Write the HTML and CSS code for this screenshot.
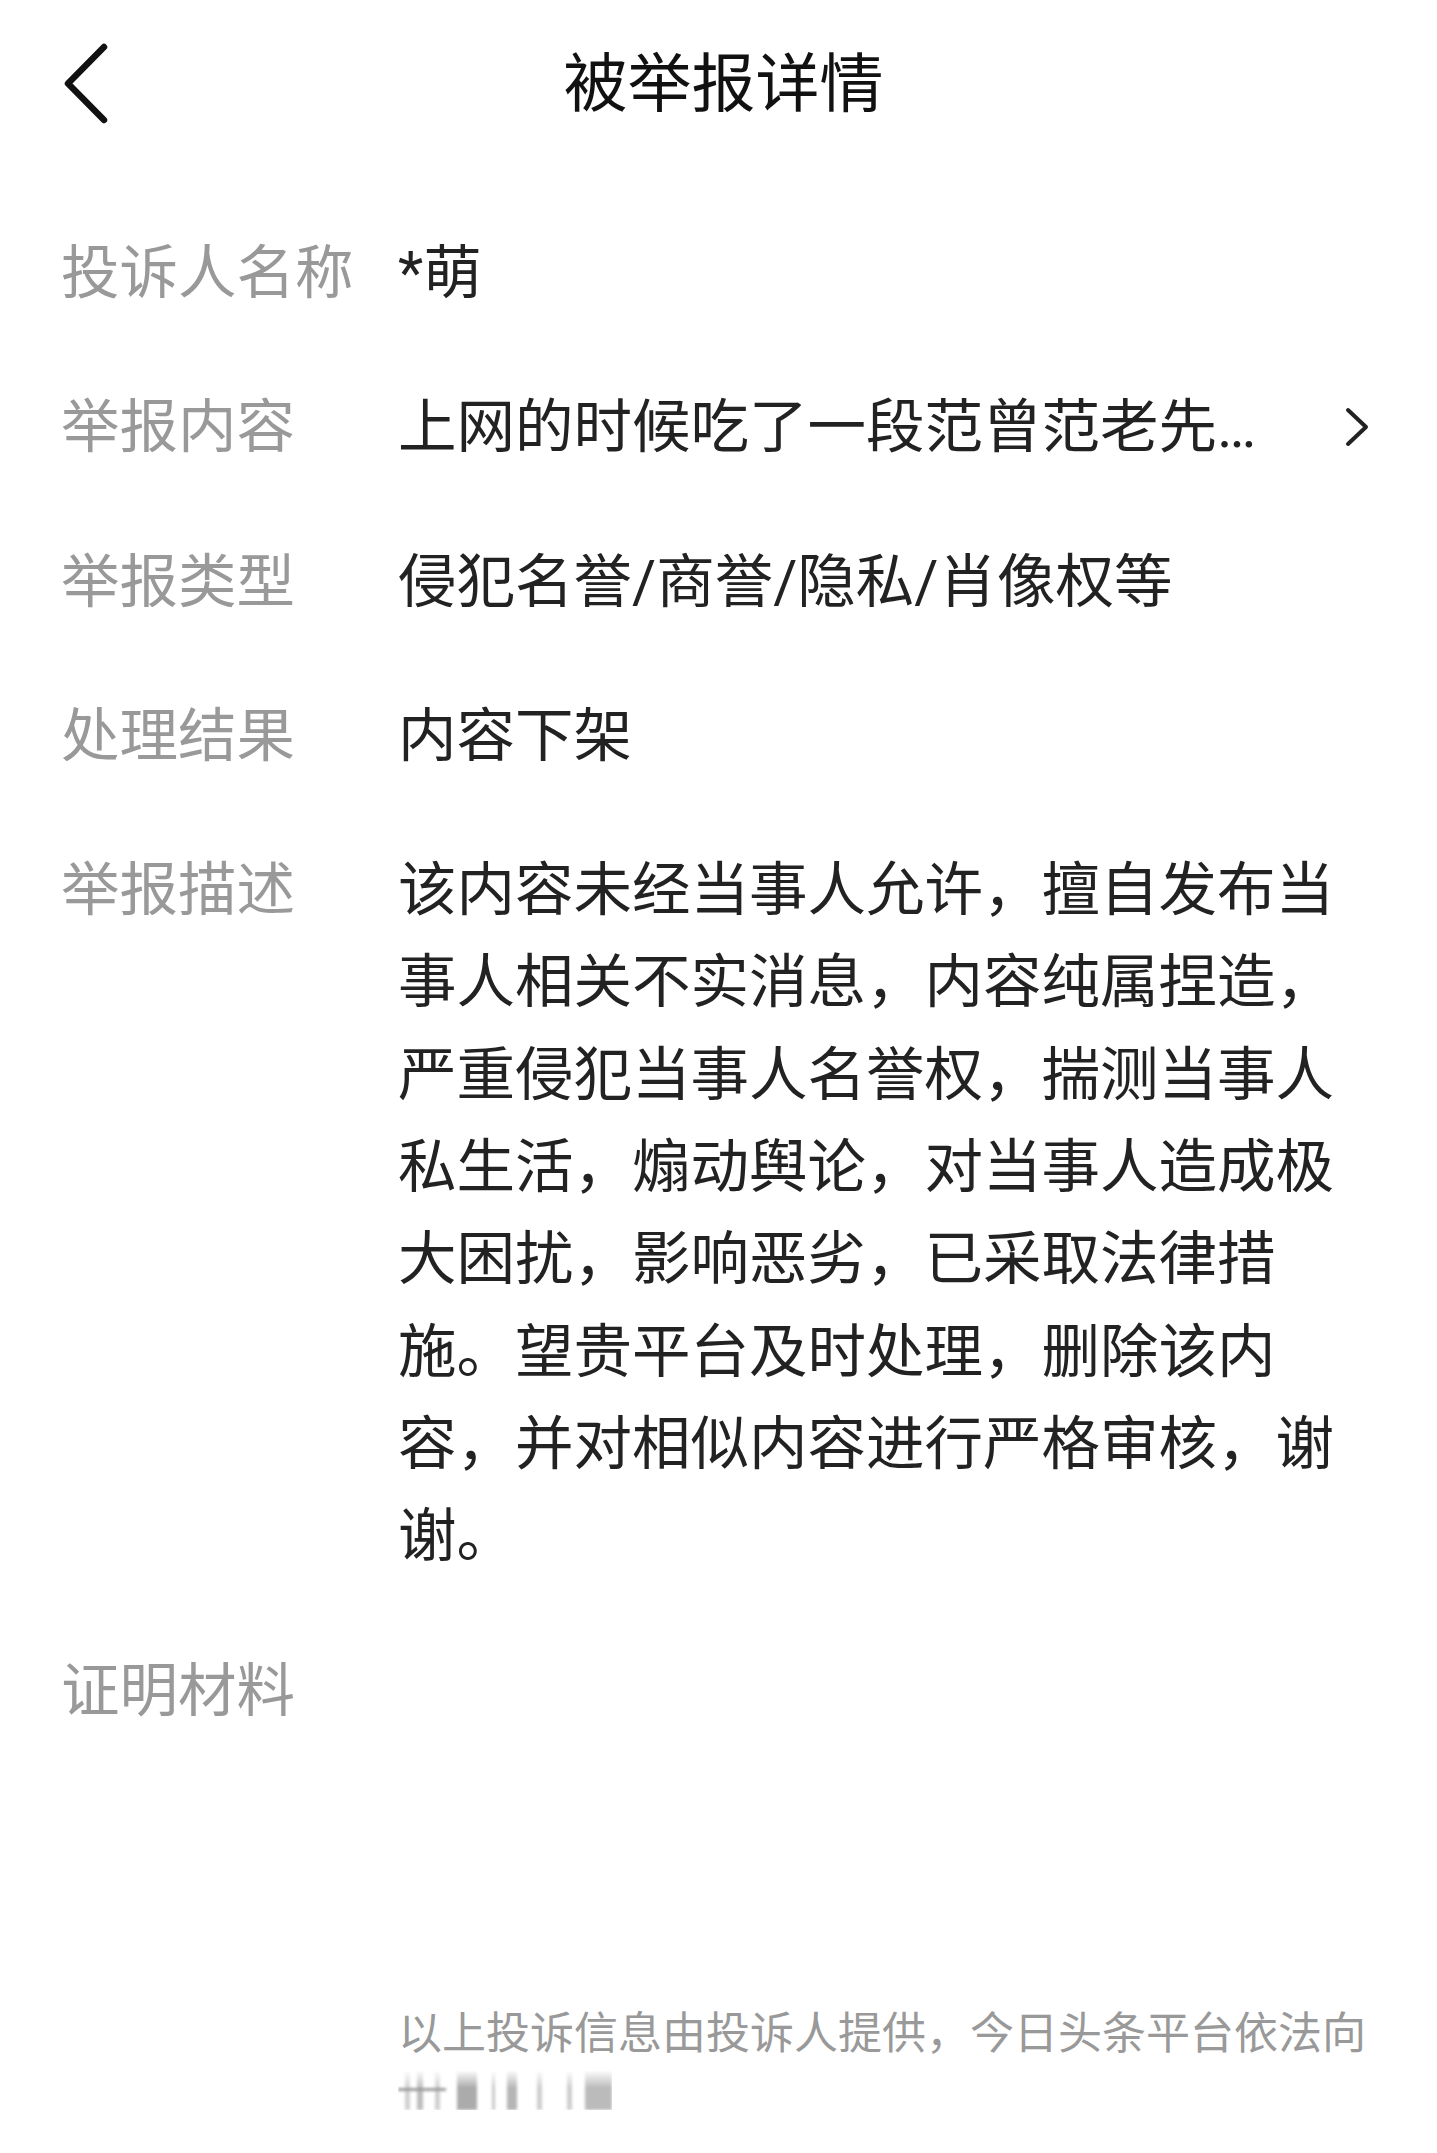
FILE: index.html
```html
<!DOCTYPE html>
<html lang="zh-CN">
<head>
<meta charset="utf-8">
<title>被举报详情</title>
<link rel="stylesheet" href="styles.css">
</head>
<body>
<header class="topbar">
  <button class="back" aria-label="返回">
    <svg viewBox="0 0 56 90" width="56" height="90"><path d="M44 7 L8 43.5 L44 80" fill="none" stroke="#111" stroke-width="6.5" stroke-linecap="round" stroke-linejoin="round"/></svg>
  </button>
  <h1 class="title">被举报详情</h1>
  <span class="spacer"></span>
</header>
<main class="details">
  <dl class="info">
    <div class="row">
      <dt>投诉人名称</dt>
      <dd>*萌</dd>
    </div>
    <div class="row row-link">
      <dt>举报内容</dt>
      <dd><span class="clip">上网的时候吃了一段范曾范老先…</span><svg class="chev" viewBox="0 0 24 40" width="24" height="40"><path d="M3 3 L21 20 L3 37" fill="none" stroke="#222" stroke-width="4" stroke-linecap="round" stroke-linejoin="round"/></svg></dd>
    </div>
    <div class="row">
      <dt>举报类型</dt>
      <dd>侵犯名誉/商誉/隐私/肖像权等</dd>
    </div>
    <div class="row">
      <dt>处理结果</dt>
      <dd>内容下架</dd>
    </div>
    <div class="row">
      <dt>举报描述</dt>
      <dd class="desc">该内容未经当事人允许，擅自发布当事人相关不实消息，内容纯属捏造，严重侵犯当事人名誉权，揣测当事人私生活，煽动舆论，对当事人造成极大困扰，影响恶劣，已采取法律措施。望贵平台及时处理，删除该内容，并对相似内容进行严格审核，谢谢。</dd>
    </div>
    <div class="row">
      <dt>证明材料</dt>
      <dd></dd>
    </div>
  </dl>
  <div class="footer">
    <p class="note">以上投诉信息由投诉人提供，今日头条平台依法向</p>
    <div class="mosaic"></div>
  </div>
</main>
</body>
</html>
```
FILE: styles.css
```css
html, body {
  margin: 0;
  background: #fff;
}
body {
  font-family: Roboto, "Noto Sans CJK SC", sans-serif;
  color: #222;
}
.topbar {
  display: grid;
  grid-template-columns: 1fr auto 1fr;
  align-items: center;
  height: 170px;
  padding: 0 60px;
}
.back {
  justify-self: start;
  display: block;
  width: 56px;
  height: 90px;
  padding: 0;
  border: 0;
  background: none;
}
.back svg {
  display: block;
}
.title {
  margin: 0 0 0 10px;
  font-size: 64px;
  font-weight: 400;
  line-height: 64px;
  color: #111;
}
.details {
  padding: 57px 60px 0 61px;
}
.info {
  margin: 0;
  display: flex;
  flex-direction: column;
  gap: 62px;
}
.row {
  display: grid;
  grid-template-columns: 337px 1fr;
  font-size: 58.5px;
  line-height: 92.3px;
}
.row dt {
  color: #999;
}
.row dd {
  margin: 0;
  color: #222;
  min-height: 92.3px;
}
.row-link dd {
  display: flex;
  justify-content: space-between;
  align-items: center;
}
.clip {
  white-space: nowrap;
}
.chev {
  display: block;
  margin-right: 8px;
}
.desc {
  max-width: 948px;
  text-spacing-trim: space-all;
}
.footer {
  margin: 268px 0 0 337px;
  font-size: 44px;
  line-height: 58px;
  color: #999;
}
.note {
  margin: 0;
  white-space: nowrap;
}
.mosaic {
  width: 214px;
  height: 40px;
  margin-top: 7px;
  background:
    linear-gradient(#9a9a9a, #9a9a9a) 0 18px / 48px 3px no-repeat,
    linear-gradient(to right, #fff 0 7px, #d0d0d0 7px 12px, #fff 12px 19px, #bdbdbd 19px 25px, #fff 25px 37px, #cfcfcf 37px 42px, #fff 42px 59px, #ababab 59px 79px, #fff 79px 94px, #c8c8c8 94px 97px, #fff 97px 109px, #b5b5b5 109px 119px, #fff 119px 139px, #cdcdcd 139px 144px, #fff 144px 169px, #cdcdcd 169px 174px, #fff 174px 187px, #bbb 187px 214px);
  filter: blur(1.5px);
  -webkit-mask-image: linear-gradient(to bottom, transparent 0, #000 45%);
  mask-image: linear-gradient(to bottom, transparent 0, #000 45%);
}
```
